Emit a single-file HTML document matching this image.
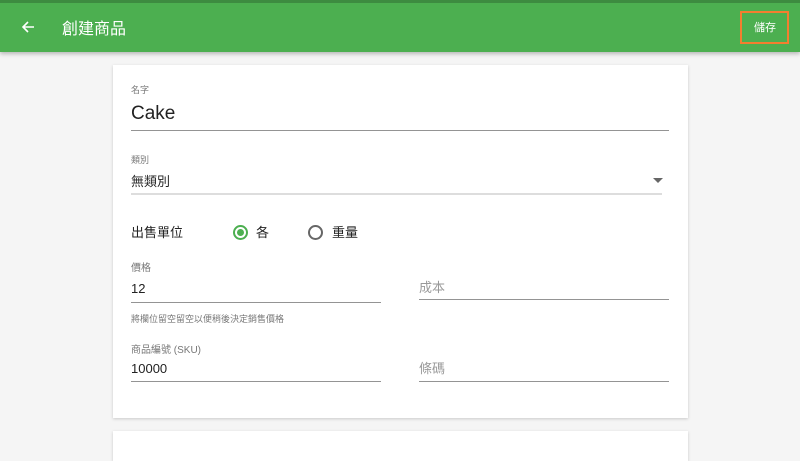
<!DOCTYPE html>
<html><head><meta charset="utf-8"><style>
*{margin:0;padding:0;box-sizing:border-box}
body{width:800px;height:445px;overflow:hidden;background:#f5f5f5;font-family:"Liberation Sans","Noto Sans CJK TC",sans-serif;position:relative}
.a{position:absolute}
.hdr{left:0;top:0;width:800px;height:52px;background:#4caf50;border-top:3px solid #3d8b40;box-shadow:0 2px 4px rgba(0,0,0,.25)}
.card{background:#fff;box-shadow:0 1px 3px rgba(0,0,0,.18)}
.lbl{font-size:10px;color:#777}
.val{color:#222}
.line{height:1px;background:#949494}
.ph{font-size:13px;color:#999}
</style></head><body>
<div class="a hdr"></div>
<svg class="a" style="left:20px;top:19px" width="16" height="16" viewBox="0 0 16 16"><path d="M14 8H3M8 3L3 8l5 5" stroke="#fff" stroke-width="1.6" fill="none"/></svg>
<div class="a" style="left:62px;top:15px;font-size:16px;color:#fff">創建商品</div>
<div class="a" style="left:740px;top:11px;width:49px;height:33px;border:2px solid #f37e2f"></div>
<div class="a" style="left:754px;top:19px;font-size:11px;color:#fff">儲存</div>

<div class="a card" style="left:113px;top:65px;width:575px;height:353px"></div>
<div class="a card" style="left:113px;top:431px;width:575px;height:30px"></div>

<div class="a lbl" style="left:131px;top:83px;font-size:9px">名字</div>
<div class="a val" style="left:131px;top:103px;font-size:19px">Cake</div>
<div class="a line" style="left:131px;top:130px;width:538px"></div>

<div class="a lbl" style="left:131px;top:153px;font-size:9px">類別</div>
<div class="a val" style="left:131px;top:171px;font-size:13px">無類別</div>
<div class="a" style="left:131px;top:193px;width:531px;height:2px;background:#ddd"></div>
<div class="a" style="left:653px;top:178px;width:0;height:0;border-left:5px solid transparent;border-right:5px solid transparent;border-top:5px solid #666"></div>

<div class="a val" style="left:131px;top:222px;font-size:13px">出售單位</div>
<div class="a" style="left:233px;top:225px;width:15px;height:15px;border:2px solid #4caf50;border-radius:50%"></div>
<div class="a" style="left:237px;top:229px;width:7px;height:7px;background:#4caf50;border-radius:50%"></div>
<div class="a val" style="left:256px;top:222px;font-size:13px">各</div>
<div class="a" style="left:308px;top:225px;width:15px;height:15px;border:2px solid #666;border-radius:50%"></div>
<div class="a val" style="left:332px;top:222px;font-size:13px">重量</div>

<div class="a lbl" style="left:131px;top:259px">價格</div>
<div class="a val" style="left:131px;top:281px;font-size:13px">12</div>
<div class="a line" style="left:131px;top:302px;width:250px"></div>
<div class="a ph" style="left:419px;top:277px">成本</div>
<div class="a line" style="left:419px;top:299px;width:250px"></div>

<div class="a lbl" style="left:131px;top:312px;font-size:9px">將欄位留空留空以便稍後決定銷售價格</div>

<div class="a lbl" style="left:131px;top:341px">商品編號 (SKU)</div>
<div class="a val" style="left:131px;top:361px;font-size:13px">10000</div>
<div class="a line" style="left:131px;top:381px;width:250px"></div>
<div class="a ph" style="left:419px;top:358px">條碼</div>
<div class="a line" style="left:419px;top:381px;width:250px"></div>
</body></html>
